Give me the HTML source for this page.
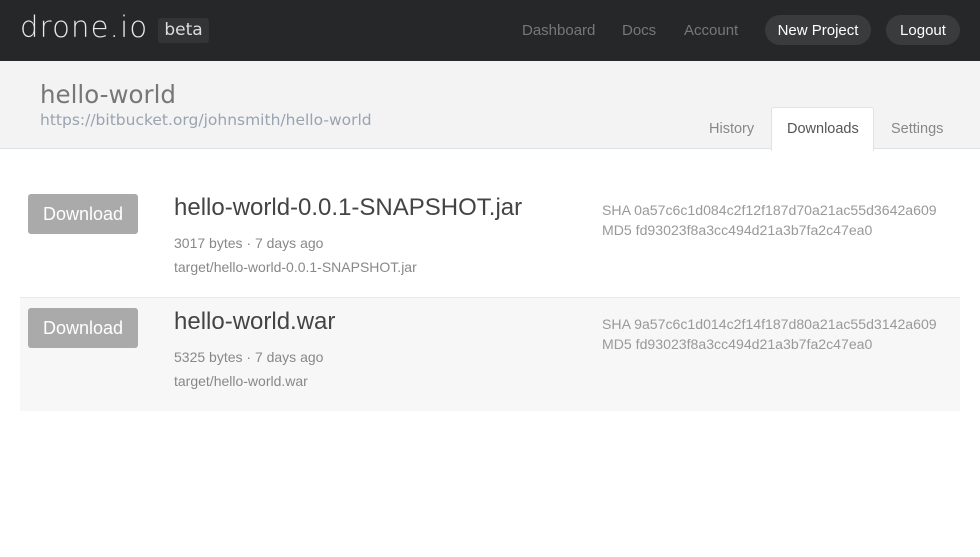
<!DOCTYPE html>
<html><head><style>
body{margin:0;width:980px;height:557px;background:#fff;font-family:"Liberation Sans",sans-serif;overflow:hidden;position:relative}
.top{position:absolute;left:0;top:0;width:980px;height:61px;background:#262729}
.logo{position:absolute;left:20px;top:10px;color:#e8e8e8;font-family:"DejaVu Sans",sans-serif;font-size:29px;font-weight:200;letter-spacing:1.2px;line-height:34px}
.beta{position:absolute;left:158px;top:18px;width:51px;height:25px;background:#333436;border-radius:3px;color:#ddd;font-family:"DejaVu Sans",sans-serif;font-size:17px;text-align:center;line-height:25px}
.nav{position:absolute;top:22px;color:#777;font-size:15px}
.pill{position:absolute;top:15px;height:30px;line-height:31px;background:#3a3b3d;border-radius:15px;color:#fff;font-size:15px;text-align:center}
.sub{position:absolute;left:0;top:61px;width:980px;height:87px;background:#f3f3f3;border-bottom:1px solid #dde3e6}
.t{position:absolute;color:#777}
.tab{position:absolute;top:121px;font-size:14.5px;color:#888}
.dl{position:absolute;left:28px;width:110px;height:40px;background:#aaa;border-radius:3px;color:#fff;font-size:18px;text-align:center;line-height:40px}
.row2{position:absolute;left:20px;top:297px;width:940px;height:113px;background:#f7f7f7;border-top:1px solid #e9e9e9}
</style></head><body>
<div class="top"></div>
<div class="logo">drone.io</div>
<div class="beta">beta</div>
<div class="nav" style="left:522px">Dashboard</div>
<div class="nav" style="left:622px">Docs</div>
<div class="nav" style="left:684px">Account</div>
<div class="pill" style="left:765px;width:106px">New Project</div>
<div class="pill" style="left:886px;width:74px">Logout</div>
<div class="sub"></div>
<div class="t" style="left:40px;top:80px;font-size:24.5px;font-family:'DejaVu Sans',sans-serif;color:#777">hello-world</div>
<div class="t" style="left:40px;top:111px;font-size:15.5px;font-family:'DejaVu Sans',sans-serif;color:#9aa3b0">https://bitbucket.org/johnsmith/hello-world</div>
<div style="position:absolute;left:771px;top:107px;width:101px;height:43px;background:#fff;border:1px solid #dde3e6;border-bottom:none;border-radius:3px 3px 0 0"></div>
<div class="tab" style="left:709px">History</div>
<div class="tab" style="left:787px;color:#555">Downloads</div>
<div class="tab" style="left:891px">Settings</div>
<div class="row2"></div>
<div class="dl" style="top:194px">Download</div>
<div class="t" style="left:174px;top:194px;font-size:24px;color:#444">hello-world-0.0.1-SNAPSHOT.jar</div>
<div class="t" style="left:174px;top:235px;font-size:14px;color:#888">3017 bytes · 7 days ago</div>
<div class="t" style="left:174px;top:259px;font-size:14px;color:#888">target/hello-world-0.0.1-SNAPSHOT.jar</div>
<div class="t" style="left:602px;top:200px;font-size:14.1px;color:#999;line-height:20px">SHA 0a57c6c1d084c2f12f187d70a21ac55d3642a609<br>MD5 fd93023f8a3cc494d21a3b7fa2c47ea0</div>
<div class="dl" style="top:308px">Download</div>
<div class="t" style="left:174px;top:308px;font-size:24px;color:#444">hello-world.war</div>
<div class="t" style="left:174px;top:349px;font-size:14px;color:#888">5325 bytes · 7 days ago</div>
<div class="t" style="left:174px;top:373px;font-size:14px;color:#888">target/hello-world.war</div>
<div class="t" style="left:602px;top:314px;font-size:14.1px;color:#999;line-height:20px">SHA 9a57c6c1d014c2f14f187d80a21ac55d3142a609<br>MD5 fd93023f8a3cc494d21a3b7fa2c47ea0</div>
</body></html>
